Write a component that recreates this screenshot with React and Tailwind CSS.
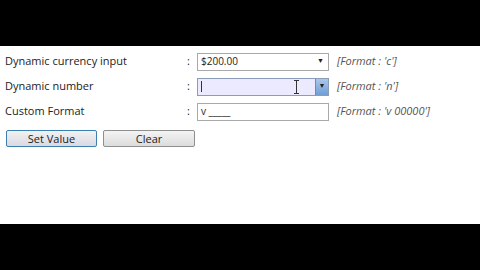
function Row({ label, children, hint }) {
  return (
    <div className="flex items-center h-[25px]">
      <div className="w-[187px] pl-[5px]">{label}</div>
      <div className="w-[10px]">:</div>
      <div className="w-[132px] h-[18px]">{children}</div>
      <div className="pl-[8px] italic text-[#555]">{hint}</div>
    </div>
  );
}

export default function App() {
  return (
    <div className="w-[480px] h-[270px] bg-black flex flex-col" style={{ fontFamily: "'Open Sans', sans-serif" }}>
      <div className="h-[46px]" />
      <div className="h-[178px] bg-white text-[11px] text-[#222] pt-[3px]">
        <Row label="Dynamic currency input" hint="[Format : 'c']">
          <div className="h-full border border-[#a9a9a9] flex items-center justify-between pl-[3px] pr-[4px] bg-white">
            <span className="text-[10px]">$200.00</span>
            <span className="text-[7px] text-[#222]">▼</span>
          </div>
        </Row>
        <Row label="Dynamic number" hint="[Format : 'n']">
          <div className="h-full border border-[#8c9cb8] flex bg-[#eceaff]">
            <div className="flex-1 flex items-center pl-[3px] relative">
              <div className="w-px h-[11px] bg-[#333]" />
              <div className="absolute left-[96px] top-[1px] flex flex-col items-center">
                <div className="w-[5px] h-px bg-[#333]" />
                <div className="w-px h-[12px] bg-[#333]" />
                <div className="w-[5px] h-px bg-[#333]" />
              </div>
            </div>
            <div className="w-[13px] bg-gradient-to-b from-[#a9c8ea] to-[#6f9ed5] flex items-center justify-center border-l border-[#6b8cbf]">
              <span className="text-[7px] text-[#222]">▼</span>
            </div>
          </div>
        </Row>
        <Row label="Custom Format" hint="[Format : 'v 00000']">
          <div className="h-full border border-[#a9a9a9] flex items-center pl-[3px] bg-white">
            <span className="text-[10px]">v _____</span>
          </div>
        </Row>
        <div className="flex gap-[6px] pl-[6px] pt-[6px]">
          <button className="w-[91px] h-[17px] rounded-[2px] border border-[#3c7fb1] bg-gradient-to-b from-[#f2f2f2] to-[#d9d9e3] text-[11px] leading-none">
            Set Value
          </button>
          <button className="w-[92px] h-[17px] rounded-[2px] border border-[#8e8f8f] bg-gradient-to-b from-[#f4f4f4] to-[#dcdcdc] text-[11px] leading-none">
            Clear
          </button>
        </div>
      </div>
    </div>
  );
}
